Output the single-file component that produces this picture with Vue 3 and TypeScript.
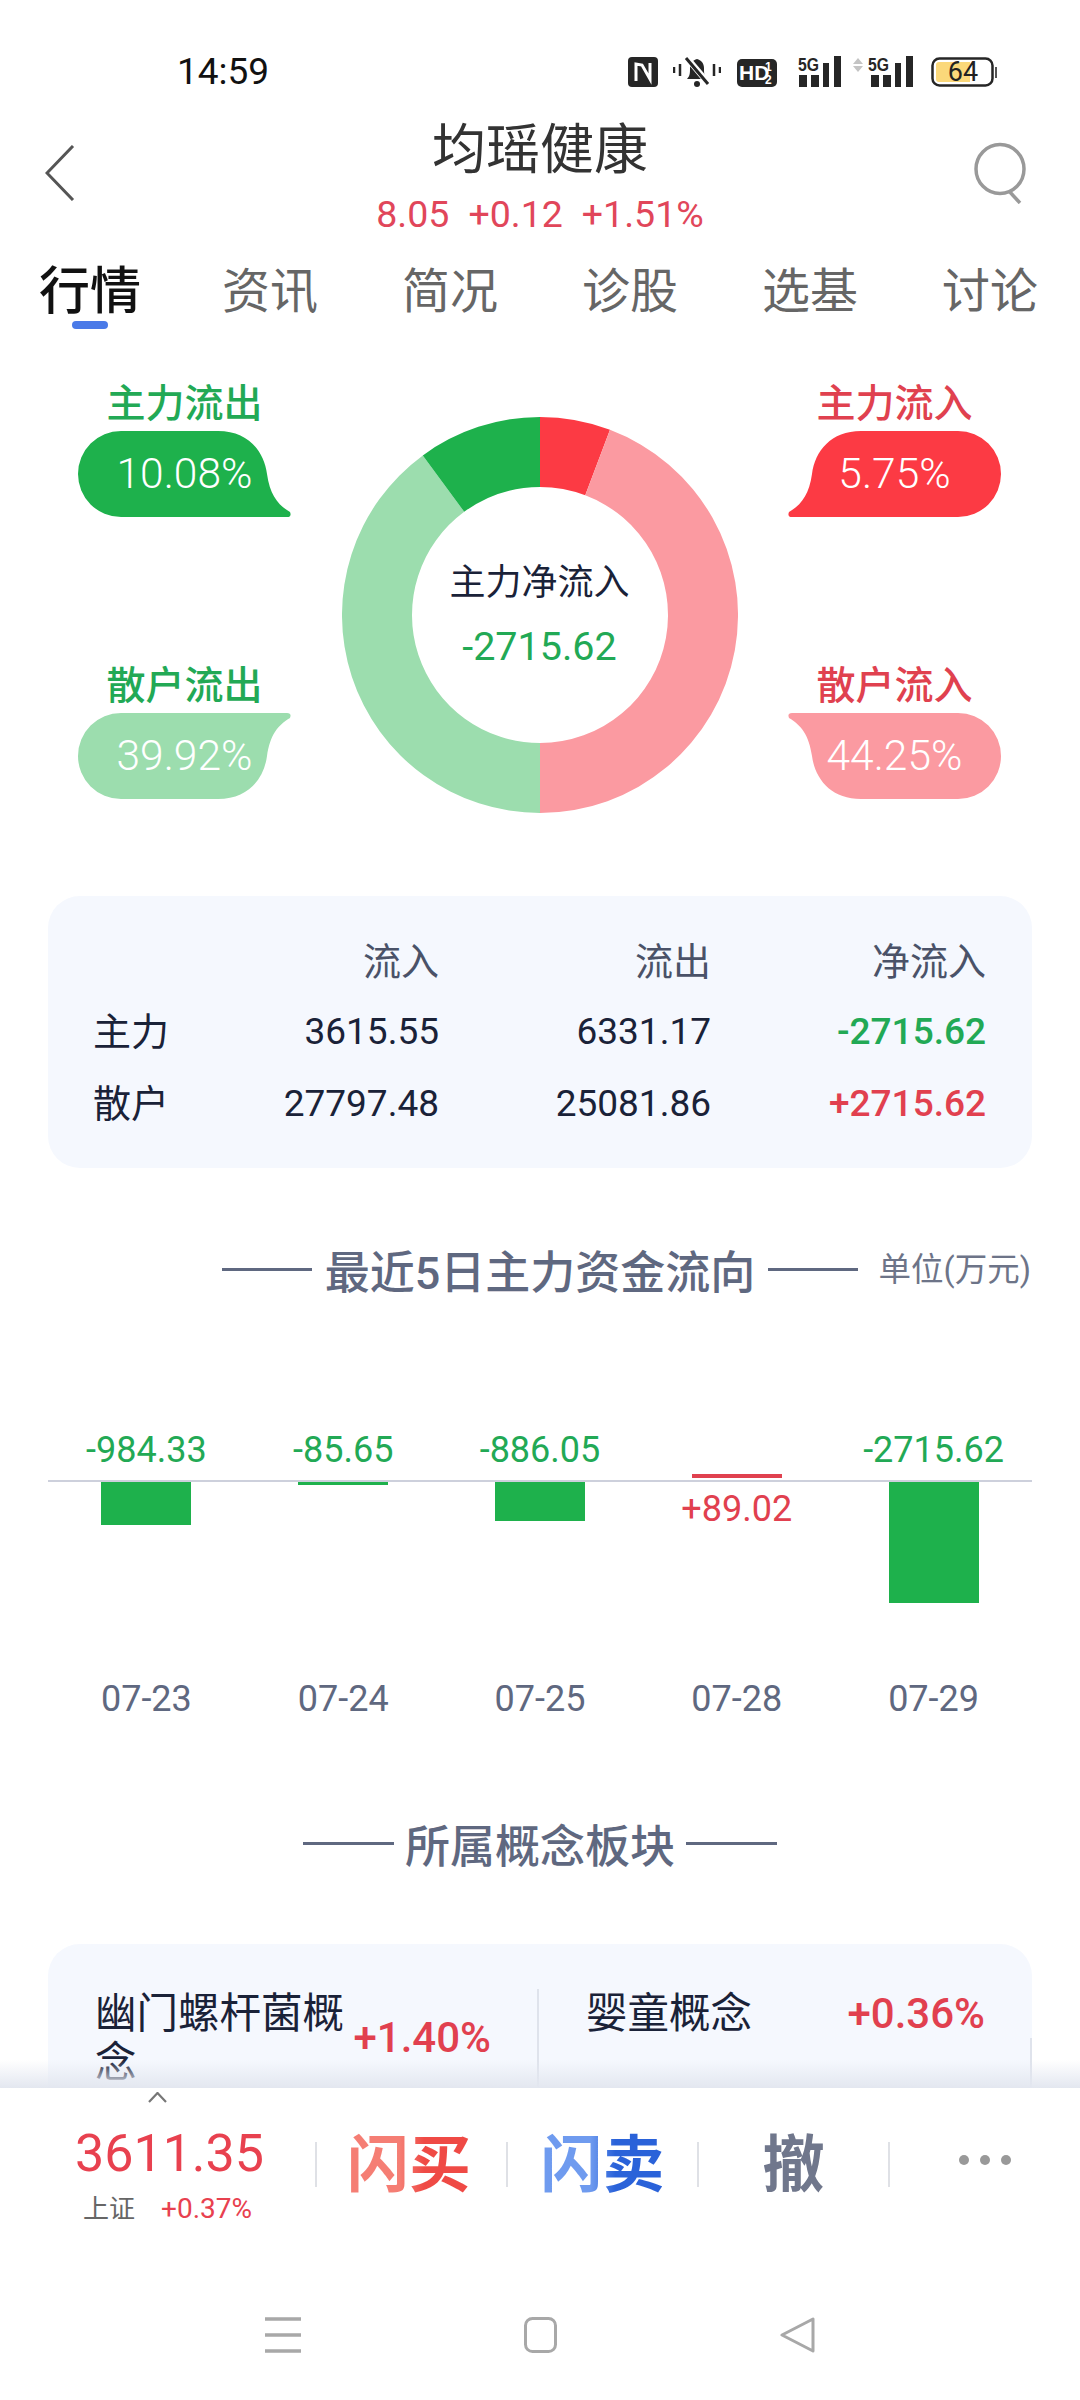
<script setup lang="ts">
interface Bubble { label: string; value: string; tone: string; flipX: boolean; flipY: boolean }
const leftBubbles: Bubble[] = [
  { label: '主力流出', value: '10.08%', tone: 'g1', flipX: false, flipY: false },
  { label: '散户流出', value: '39.92%', tone: 'g2', flipX: false, flipY: true },
]
const rightBubbles: Bubble[] = [
  { label: '主力流入', value: '5.75%', tone: 'r1', flipX: true, flipY: false },
  { label: '散户流入', value: '44.25%', tone: 'r2', flipX: true, flipY: true },
]
const slices = [
  { pct: 5.75, color: '#fc3a44' },
  { pct: 44.25, color: '#fb9aa1' },
  { pct: 39.92, color: '#9cddae' },
  { pct: 10.08, color: '#1eb14c' },
]
function pt(r: number, a: number): string {
  const t = (a - 90) * Math.PI / 180
  return `${(198 + r * Math.cos(t)).toFixed(2)} ${(198 + r * Math.sin(t)).toFixed(2)}`
}
let acc = 0
const arcs = slices.map((s) => {
  const a0 = acc * 3.6
  acc += s.pct
  const a1 = acc * 3.6
  const large = a1 - a0 > 180 ? 1 : 0
  return {
    color: s.color,
    d: `M${pt(198, a0)} A198 198 0 ${large} 1 ${pt(198, a1)} L${pt(128, a1)} A128 128 0 ${large} 0 ${pt(128, a0)} Z`,
  }
})
const tabs = ['行情', '资讯', '简况', '诊股', '选基', '讨论']
const rows = [
  { name: '主力', a: '3615.55', b: '6331.17', c: '-2715.62', up: false },
  { name: '散户', a: '27797.48', b: '25081.86', c: '+2715.62', up: true },
]
const bars = [
  { date: '07-23', value: '-984.33', h: 44 },
  { date: '07-24', value: '-85.65', h: 4 },
  { date: '07-25', value: '-886.05', h: 40 },
  { date: '07-28', value: '+89.02', h: 4 },
  { date: '07-29', value: '-2715.62', h: 122 },
]
const isUp = (v: string) => v.startsWith('+')
const barStyle = (h: number) => ({ height: `${h}px` })
</script>

<template>
  <div class="page">
    <div class="status">
      <span class="time">14:59</span>
      <div class="icons">
        <svg width="30" height="30" viewBox="0 0 30 30"><rect width="30" height="30" rx="4" fill="#262626"/><path d="M8 24V7l6 1 8 14V6" fill="none" stroke="#fff" stroke-width="3"/></svg>
        <svg class="bell" width="48" height="33" viewBox="0 0 48 33"><path d="M14 24c3-3 3-6 3-11 0-5 3-8 7-9 4 1 7 4 7 9 0 5 0 8 3 11z" fill="#262626"/><circle cx="24" cy="29" r="3" fill="#262626"/><path d="M14 3l22 26" stroke="#fff" stroke-width="6"/><path d="M13 3l22 26" stroke="#262626" stroke-width="3"/><path d="M1 12v6M7 9v12M41 9v12M47 12v6" stroke="#262626" stroke-width="2.5"/></svg>
        <svg class="hd" width="40" height="28" viewBox="0 0 40 28"><rect width="40" height="28" rx="5" fill="#262626"/><text x="2" y="21" class="hd-t">HD</text><text x="28" y="12" class="hd-s">1</text><text x="28" y="25" class="hd-s">2</text></svg>
        <svg class="sig" width="44" height="38" viewBox="0 -6 44 38"><text x="1" y="15" class="five" textLength="21" lengthAdjust="spacingAndGlyphs">5G</text><path d="M2 19h8v12H2zM14 19h8v12H14zM26 7h6v24h-6zM37 0h7v31h-7z" fill="#262626"/></svg>
        <svg class="sig2" width="60" height="38" viewBox="0 -6 60 38"><path d="M5 2l5 6H0zM5 16l5-6H0z" fill="#c4c4c4"/><text x="15" y="15" class="five" textLength="21" lengthAdjust="spacingAndGlyphs">5G</text><path d="M18 19h8v12h-8zM30 19h8v12h-8zM42 7h6v24h-6zM53 0h7v31h-7z" fill="#262626"/></svg>
        <svg class="batt" width="66" height="30" viewBox="0 0 66 30"><rect x="1.5" y="1.5" width="60" height="27" rx="7" fill="#fff" stroke="#262626" stroke-width="2.5"/><path d="M8 5h31v20H8a3 3 0 0 1-3-3V8a3 3 0 0 1 3-3z" fill="#fbd87a"/><rect x="64" y="10" width="2.5" height="11" fill="#555"/><text x="32" y="24" class="batt-t">64</text></svg>
      </div>
    </div>

    <header class="head">
      <svg class="back" width="30" height="56" viewBox="0 0 30 56"><path d="M28 1L2 28l26 27" fill="none" stroke="#555" stroke-width="3"/></svg>
      <h1 class="name">均瑶健康</h1>
      <p class="quote"><span>8.05</span><span>+0.12</span><span>+1.51%</span></p>
      <svg class="search" width="52" height="62" viewBox="0 0 52 62"><ellipse cx="26" cy="27" rx="24" ry="24.5" fill="none" stroke="#999" stroke-width="3.5"/><path d="M35 49l11 12" stroke="#999" stroke-width="3.5"/></svg>
    </header>

    <nav class="tabs">
      <span v-for="(t, i) in tabs" :key="t" class="tab" :class="{ on: i === 0 }">{{ t }}</span>
    </nav>

    <section class="flow">
      <div class="side">
        <div v-for="b in leftBubbles" :key="b.label" class="group">
          <div class="lab" :class="b.tone">{{ b.label }}</div>
          <div class="bubble">
            <svg class="shape" :class="[b.tone, { fx: b.flipX, fy: b.flipY }]" viewBox="0 0 213 86"><path d="M43 0H140C170 0 186 20 189 43C192 64 200 74 212 81Q214 86 209 86H43A43 43 0 0 1 43 0Z"/></svg>
            <span class="pct">{{ b.value }}</span>
          </div>
        </div>
      </div>
      <div class="donut">
        <svg width="396" height="396" viewBox="0 0 396 396"><path v-for="a in arcs" :key="a.color" :d="a.d" :fill="a.color"/></svg>
        <div class="core">
          <div class="core-l">主力净流入</div>
          <div class="core-v">-2715.62</div>
        </div>
      </div>
      <div class="side">
        <div v-for="b in rightBubbles" :key="b.label" class="group">
          <div class="lab" :class="b.tone">{{ b.label }}</div>
          <div class="bubble">
            <svg class="shape" :class="[b.tone, { fx: b.flipX, fy: b.flipY }]" viewBox="0 0 213 86"><path d="M43 0H140C170 0 186 20 189 43C192 64 200 74 212 81Q214 86 209 86H43A43 43 0 0 1 43 0Z"/></svg>
            <span class="pct">{{ b.value }}</span>
          </div>
        </div>
      </div>
    </section>

    <section class="table">
      <div class="tr th"><span></span><span>流入</span><span>流出</span><span>净流入</span></div>
      <div v-for="r in rows" :key="r.name" class="tr">
        <span class="who">{{ r.name }}</span><span>{{ r.a }}</span><span>{{ r.b }}</span>
        <span class="net" :class="r.up ? 'up' : 'down'">{{ r.c }}</span>
      </div>
    </section>

    <div class="title first">
      <i class="rule long"></i><span>最近5日主力资金流向</span><i class="rule long"></i>
      <em class="unit">单位(万元)</em>
    </div>

    <div class="chart">
      <div v-for="b in bars" :key="b.date" class="col">
        <div class="above">
          <span v-if="!isUp(b.value)" class="val down">{{ b.value }}</span>
          <i v-else class="bar red" :style="barStyle(b.h)"></i>
        </div>
        <div class="below">
          <i v-if="!isUp(b.value)" class="bar green" :style="barStyle(b.h)"></i>
          <span v-else class="val up under">{{ b.value }}</span>
        </div>
        <div class="date">{{ b.date }}</div>
      </div>
    </div>

    <div class="title second">
      <i class="rule short"></i><span>所属概念板块</span><i class="rule short"></i>
    </div>

    <section class="concepts">
      <div class="cell left">
        <span class="cname narrow">幽门螺杆菌概念</span><span class="cval low">+1.40%</span>
      </div>
      <div class="cell right">
        <span class="cname">婴童概念</span><span class="cval">+0.36%</span>
      </div>
    </section>

    <div class="dock">
      <div class="fade"></div>
      <div class="panel">
        <div class="trade">
          <div class="index">
            <svg class="caret" width="19" height="11" viewBox="0 0 19 11"><path d="M1 10l8.500-9L18 10" fill="none" stroke="#777" stroke-width="2.200"/></svg>
            <div class="price">3611.35</div>
            <div class="sub"><span class="sub-n">上证</span><span class="sub-v">+0.37%</span></div>
          </div>
          <i class="sep"></i>
          <div class="act buy">闪买</div>
          <i class="sep"></i>
          <div class="act sell">闪卖</div>
          <i class="sep"></i>
          <div class="act undo">撤</div>
          <i class="sep"></i>
          <div class="more"><b></b><b></b><b></b></div>
        </div>
        <div class="sysnav">
          <svg width="36" height="36" viewBox="0 0 36 36"><path d="M0 2h36M0 18h36M0 34h36" stroke="#a8a8a8" stroke-width="3.500"/></svg>
          <svg width="33" height="36" viewBox="0 0 33 36"><rect x="1.500" y="1.500" width="30" height="33" rx="7" fill="none" stroke="#a8a8a8" stroke-width="3"/></svg>
          <svg width="35" height="36" viewBox="0 0 35 36"><path d="M33 2v32L2 18z" fill="none" stroke="#a8a8a8" stroke-width="3" stroke-linejoin="round"/></svg>
        </div>
      </div>
    </div>
  </div>
</template>

<style>
html, body { margin: 0; padding: 0; background: #fff; }
</style>

<style scoped>
.page {
  position: relative;
  width: 1080px;
  height: 2400px;
  overflow: hidden;
  background: #fff;
  font-family: Roboto, "Noto Sans CJK SC", sans-serif;
  color: #1a2238;
}
.status { height: 40px; padding-top: 52px; padding-bottom: 8px; position: relative; }
.time { position: absolute; left: 177px; top: 50px; font-size: 37px; line-height: 44px; color: #111; }
.icons { position: absolute; left: 628px; top: 55px; display: flex; align-items: flex-start; }
.icons svg { display: block; margin-top: 2px; }
.icons .bell { margin-left: 15px; margin-top: 0; }
.icons .hd { margin-left: 16px; margin-top: 4px; }
.icons .sig { margin-left: 20px; margin-top: -5px; }
.icons .sig2 { margin-left: 12px; margin-top: -5px; }
.icons .batt { margin-left: 18px; }
.hd-t { font: 700 21px "Liberation Sans", sans-serif; fill: #fff; }
.hd-s { font: 700 12px "Liberation Sans", sans-serif; fill: #fff; }
.five { font: 700 19px "Liberation Sans", sans-serif; fill: #262626; }
.batt-t { font: 400 27px Roboto, sans-serif; fill: #222; text-anchor: middle; }

.head { position: relative; padding-top: 19px; text-align: center; }
.name { margin: 0; font-size: 54px; line-height: 64px; font-weight: 400; color: #333; }
.quote { margin: 9px 0 0; display: flex; justify-content: center; gap: 19px; font-size: 37.5px; line-height: 44px; color: #e1465a; }
.back { position: absolute; left: 45px; top: 45px; }
.search { position: absolute; left: 974px; top: 42px; }

.tabs { margin-top: 26px; display: grid; grid-template-columns: repeat(6, 180px); }
.tab { position: relative; text-align: center; font-size: 48px; line-height: 60px; color: #666; }
.tab.on { font-size: 51px; color: #111; font-weight: 500; }
.tab.on::after { content: ""; position: absolute; left: 72px; top: 59px; width: 36px; height: 8px; border-radius: 4px; background: #4a7ae8; }

.flow { margin-top: 63px; height: 428px; padding: 0 79px 0 78px; display: flex; justify-content: space-between; }
.side { width: 213px; display: flex; flex-direction: column; gap: 150px; }
.group { text-align: center; }
.lab { font-size: 39px; line-height: 38px; margin-bottom: 8px; font-weight: 500; }
.lab.g1, .lab.g2 { color: #22a955; }
.lab.r1, .lab.r2 { color: #e0414f; }
.bubble { position: relative; height: 86px; line-height: 86px; }
.shape { position: absolute; left: 0; top: 0; width: 213px; height: 86px; }
.shape.g1 { fill: #1eb14c; }
.shape.g2 { fill: #9cddae; }
.shape.r1 { fill: #fc3a44; }
.shape.r2 { fill: #fb9aa1; }
.shape.fx { transform: scaleX(-1); }
.shape.fy { transform: scaleY(-1); }
.shape.fx.fy { transform: scale(-1, -1); }
.pct { position: relative; font-size: 42.5px; font-weight: 300; color: #fff; }
.donut { position: relative; width: 396px; height: 396px; margin-top: 32px; }
.donut svg { display: block; }
.core { position: absolute; left: 68px; right: 68px; top: 146px; text-align: center; }
.core-l { font-size: 36px; line-height: 40px; color: #1a2238; }
.core-v { margin-top: 22px; font-size: 39.5px; line-height: 44px; color: #22a955; }

.table { margin: 83px 48px 0; height: 272px; box-sizing: border-box; padding: 30px 0 0 45px; border-radius: 32px; background: #f5f8fe; }
.tr { display: grid; grid-template-columns: 120px 226px 272px 275px; height: 72px; font-size: 37px; line-height: 72px; text-align: right; color: #1a2238; }
.tr span:first-child { text-align: left; }
.who { font-size: 38px; }
.tr.th { height: 70px; color: #4a5268; font-size: 38px; }
.net { font-weight: 500; }
.up { color: #e1404f; }
.down { color: #22a955; }

.title { display: flex; align-items: center; justify-content: center; height: 60px; font-size: 45px; font-weight: 500; color: #5f6880; position: relative; }
.title span { margin: 0 11px; }
.rule { display: block; height: 3px; background: #5f6880; }
.rule.long { width: 90px; }
.rule.short { width: 91px; }
.first { margin-top: 71px; }
.first span { margin: 0 13px; }
.unit { position: absolute; right: 49px; top: 15px; font-size: 32.5px; line-height: 32px; font-style: normal; font-weight: 400; color: #6d7488; }
.second { margin-top: 94px; }

.chart { position: relative; margin: 131px 48px 0; display: grid; grid-template-columns: repeat(5, 1fr); }
.chart::before { content: ""; position: absolute; left: 0; right: 0; top: 50px; height: 2px; background: #cdd0dc; }
.col { display: flex; flex-direction: column; align-items: center; }
.above { position: relative; height: 51px; width: 100%; display: flex; justify-content: center; align-items: flex-end; }
.below { height: 198px; width: 100%; display: flex; flex-direction: column; align-items: center; }
.bar { display: block; width: 90px; }
.bar.green { background: #1eb14c; }
.bar.red { background: #e0414f; margin-bottom: 3px; }
.val { font-size: 36px; line-height: 40px; margin-bottom: 11px; }
.val.under { margin: 8px 0 0; }
.date { font-size: 36px; line-height: 40px; color: #5f6880; }

.concepts { position: relative; margin: 71px 48px 0; height: 400px; display: flex; border-radius: 32px; background: #f5f8fe; padding-top: 45px; box-sizing: border-box; }
.concepts::after { content: ""; position: absolute; right: 0; top: 94px; width: 2px; height: 60px; background: #dfe3ec; }
.cell { display: flex; box-sizing: border-box; font-size: 41.5px; line-height: 49px; height: 120px; }
.cell.left { width: 491px; padding: 0 46px 0 47px; border-right: 2px solid #dfe3ec; justify-content: space-between; }
.cell.right { width: 491px; padding: 0 45px 0 47px; justify-content: space-between; }
.cname { color: #1a2238; }
.cname.narrow { width: 250px; }
.cval { font-size: 42px; color: #e1404f; font-weight: 500; line-height: 49px; }
.cval.low { margin-top: 24px; }

.dock { position: absolute; left: 0; right: 0; bottom: 0; height: 340px; }
.fade { height: 28px; background: linear-gradient(to bottom, rgba(228, 232, 241, 0), #e3e7f0); }
.panel { height: 312px; background: #fff; }
.trade { display: flex; align-items: flex-start; }
.index { width: 315px; flex: none; }
.caret { display: block; margin: 4px 0 0 148px; }
.price { margin-top: 21px; padding-left: 24px; text-align: center; font-size: 52px; line-height: 60px; color: #e8414f; }
.sub { margin: 5px 0 0 83px; display: flex; align-items: center; gap: 26px; line-height: 40px; }
.sub-n { font-size: 26px; color: #666; }
.sub-v { font-size: 28px; color: #e8414f; }
.sep { flex: none; width: 2px; height: 45px; margin-top: 54px; background: #dfe1e6; }
.act { flex: none; width: 189px; margin-top: 39px; text-align: center; font-size: 62px; line-height: 78px; font-weight: 700; box-sizing: border-box; }
.buy, .sell { -webkit-background-clip: text; background-clip: text; color: transparent; }
.buy { padding-right: 5px; background-image: linear-gradient(90deg, #f57e74 0 40%, #ef4a45 60%); background-size: 124px 100%; background-position: center; background-repeat: no-repeat; }
.sell { background-image: linear-gradient(90deg, #6f9bef 0 40%, #2a62d9 60%); background-size: 124px 100%; background-position: center; background-repeat: no-repeat; }
.undo { color: #70778c; }
.more { flex: 1; display: flex; justify-content: center; gap: 11px; margin-top: 67px; }
.more b { display: block; width: 10px; height: 10px; border-radius: 50%; background: #999; }
.sysnav { margin-top: 88px; display: flex; justify-content: center; gap: 223px; }
.sysnav svg { display: block; }
</style>
